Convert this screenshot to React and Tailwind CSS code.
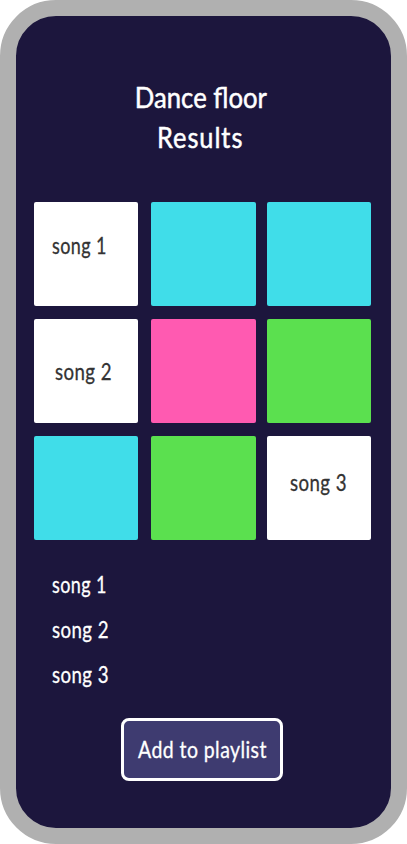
const tiles = [
  { color: 'bg-white', label: 'song 1', place: 'pl-[18px] pt-[28px]' },
  { color: 'bg-[#40dde9]' },
  { color: 'bg-[#40dde9]' },
  { color: 'bg-white', label: 'song 2', place: 'pl-[21px] pt-[37px]' },
  { color: 'bg-[#ff5ab1]' },
  { color: 'bg-[#5be04f]' },
  { color: 'bg-[#40dde9]' },
  { color: 'bg-[#5be04f]' },
  { color: 'bg-white', label: 'song 3', place: 'pl-[23px] pt-[31px]' },
];

function Song({ children }) {
  const scale = children === 'song 1' ? 'scale-x-[0.8]' : 'scale-x-[0.83]';
  return (
    <span className={`inline-block origin-left whitespace-pre text-[22.5px] leading-[32px] tracking-[0.5px] [-webkit-text-stroke:0.3px_currentColor] ${scale}`}>
      {children}
    </span>
  );
}

export default function App() {
  return (
    <div className="h-[844px] w-[407px] overflow-hidden bg-white font-['Lato',sans-serif]">
      <main className="flex h-full w-full flex-col rounded-[56px] border-[16px] border-[#b0b0b0] bg-[#1c163d] text-white">
        <h1 className="mt-[61px] flex h-[80px] flex-col items-center pr-[6px] text-[29.5px] leading-[40px] [-webkit-text-stroke:0.5px_currentColor]">
          <span className="block scale-x-[0.87]">Dance floor</span>
          <span className="block scale-x-[0.86] tracking-[1.1px]">Results</span>
        </h1>

        <section className="ml-[18px] mt-[45px] grid grid-cols-[117px_116px_104px] gap-y-[13px]">
          {tiles.map((tile, i) => (
            <div
              key={i}
              className={`h-[104px] rounded-[2px] text-[#333333] ${i % 3 === 1 ? 'w-[105px]' : 'w-[104px]'} ${tile.color} ${tile.place || ''}`}
            >
              {tile.label && <Song>{tile.label}</Song>}
            </div>
          ))}
        </section>

        <ul className="ml-[36px] mt-[29px] flex flex-col gap-[13px]">
          <li className="h-8"><Song>song 1</Song></li>
          <li className="h-8"><Song>song 2</Song></li>
          <li className="h-8"><Song>song 3</Song></li>
        </ul>

        <button className="ml-[105px] mt-[27px] flex h-[63px] w-[162px] items-center justify-center rounded-[8px] border-[3px] border-white bg-[#3e3b70] text-[22.5px] leading-[32px] tracking-[0.5px] [-webkit-text-stroke:0.3px_currentColor]">
          <span className="block scale-x-[0.865] whitespace-nowrap">Add to playlist</span>
        </button>
      </main>
    </div>
  );
}
